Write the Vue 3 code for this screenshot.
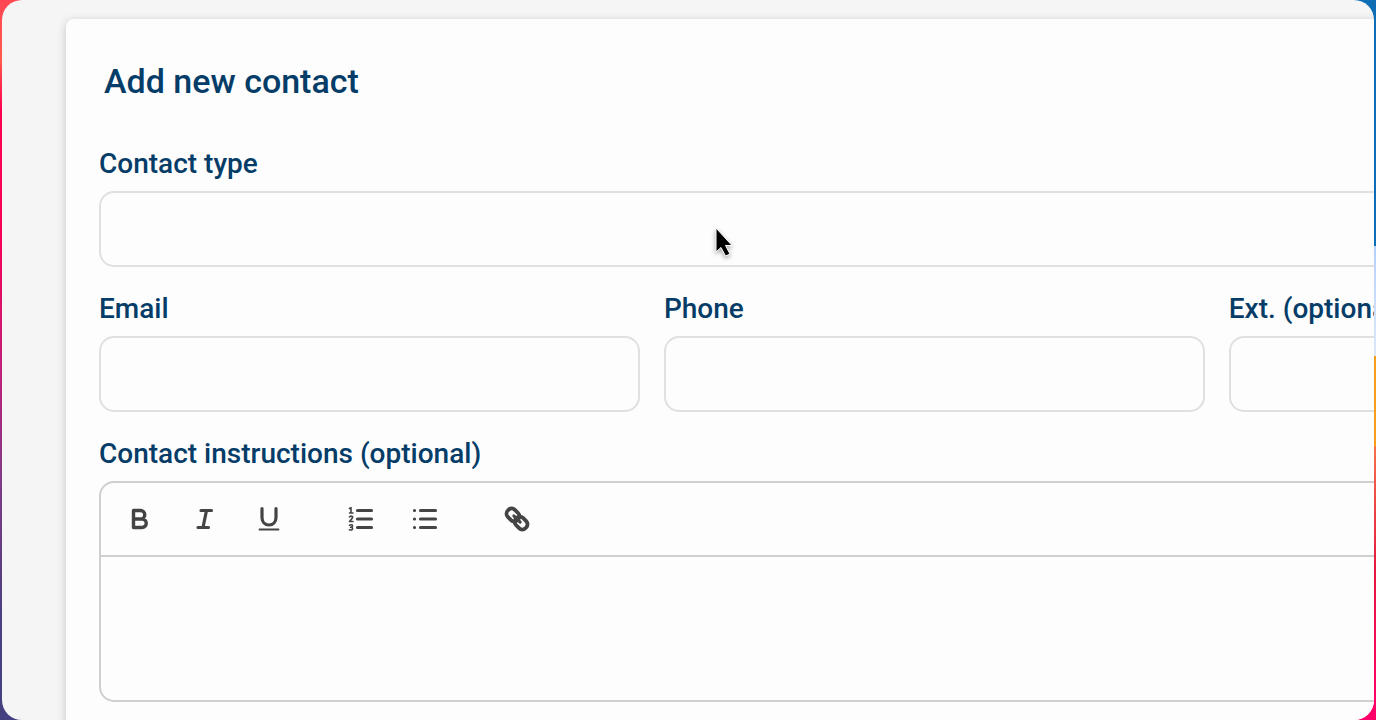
<script setup>
import { ref } from 'vue'

const contactType = ref('')
const email = ref('')
const phone = ref('')
const ext = ref('')
const instructions = ref('')
</script>

<template>
  <div class="backdrop">
    <main class="frame">
      <form class="card" @submit.prevent>
        <h1>Add new contact</h1>
        <div class="fields">
          <div class="field wide">
            <label for="type">Contact type</label>
            <input id="type" v-model="contactType" type="text" />
          </div>
          <div class="field">
            <label for="email">Email</label>
            <input id="email" v-model="email" type="email" />
          </div>
          <div class="field">
            <label for="phone">Phone</label>
            <input id="phone" v-model="phone" type="tel" />
          </div>
          <div class="field">
            <label for="ext">Ext. (optional)</label>
            <input id="ext" v-model="ext" type="text" />
          </div>
          <div class="field wide">
            <label for="instructions">Contact instructions (optional)</label>
            <div class="editor">
              <div class="toolbar" role="toolbar" aria-label="Formatting">
                <div class="group">
                  <button type="button" aria-label="Bold">
                    <svg viewBox="0 0 32 32"><path d="M8.500 7.500h7a4.200 4.200 0 0 1 0 8.500h-7zM8.500 16h8.500a4.200 4.200 0 0 1 0 8.500h-8.500z" stroke-width="3.400" /></svg>
                  </button>
                  <button type="button" aria-label="Italic">
                    <svg viewBox="0 0 32 32"><path d="M12 7.500h10.500M9 24.500h10.500M17.500 7.500l-3.500 17" stroke-width="3.200" /></svg>
                  </button>
                  <button type="button" aria-label="Underline">
                    <svg viewBox="0 0 32 32"><path d="M9 5.500v9c0 4.500 3 7.500 7 7.500s7-3 7-7.500v-9" stroke-width="3.200" /><path d="M6.500 26.500h19" stroke-width="1.800" /></svg>
                  </button>
                </div>
                <div class="group">
                  <button type="button" aria-label="Numbered list">
                    <svg viewBox="0 0 32 32"><path d="M12.500 7.500h14M12.500 16h14M12.500 24.500h14" stroke-width="3.200" /><path d="M4.500 5.500l1.500-.8v5M4.500 10h3.500M4.500 13.800q1.500-1.200 2.800-.3t-2.800 5h3.500M4.500 22.200q3-1 3 .5t-2 1.500q2.500.200 2 1.800t-3 .800" stroke-width="1.600" /></svg>
                  </button>
                  <button type="button" aria-label="Bulleted list">
                    <svg viewBox="0 0 32 32"><path d="M11.500 7.500h15M11.500 16h15M11.500 24.500h15" stroke-width="3.200" /><path d="M5.500 7.500h.01M5.500 16h.01M5.500 24.500h.01" stroke-width="3.200" /></svg>
                  </button>
                </div>
                <div class="group">
                  <button type="button" aria-label="Link">
                    <svg viewBox="0 0 32 32"><g stroke-width="3.800" transform="rotate(45 16 16)"><rect x="3.500" y="11" width="13.500" height="10" rx="4.500" /><rect x="15" y="11" width="13.500" height="10" rx="4.500" /><path d="M11.500 16h9" stroke-width="3" /></g></svg>
                  </button>
                </div>
              </div>
              <textarea id="instructions" v-model="instructions"></textarea>
            </div>
          </div>
        </div>
      </form>
    </main>
    <svg class="pointer" viewBox="0 0 24 34" aria-hidden="true">
      <path d="M4 3v24l5-4.500 4.500 8.500 4.500-2-4.500-8.500h6.500z" />
    </svg>
  </div>
</template>

<style>
body {
  background: #fd4651;
}
</style>

<style scoped>
.backdrop {
  position: relative;
  box-sizing: border-box;
  height: 100vh;
  padding: 0 2px;
  overflow: hidden;
  background:
    linear-gradient(#0f6db5 0 246px, #b5d0ff 246px, #dce8f8 356px, #f99d1c 356px 446px, #f6704b 447px, #e5173f 570px, #ff0068 700px) right / 50% 100% no-repeat,
    linear-gradient(#ff4654, #ff5a4a 60px, #ff0050 110px, #f80058 240px, #c0207a 370px, #803a88 480px, #48407f 620px, #44407f) left / 50% 100% no-repeat;
  font-family: Roboto, "Liberation Sans", sans-serif;
}

.frame {
  height: 100%;
  box-sizing: border-box;
  padding: 19px 0 0 64px;
  overflow: hidden;
  border-radius: 20px;
  background: #f5f5f5;
}

.card {
  box-sizing: border-box;
  width: 133%;
  min-height: 100%;
  padding: 41px 36px 32px 33px;
  border-radius: 8px;
  background: #fdfdfd;
  box-shadow: 0 2px 10px rgba(0, 0, 0, 0.2);
}

h1 {
  margin: 0 5px 46px;
  color: #053c68;
  font-size: 34px;
  font-weight: 500;
  line-height: 42px;
}

.fields {
  display: grid;
  grid-template-columns: repeat(3, 1fr);
  gap: 26px 24px;
}

.field {
  display: flex;
  flex-direction: column;
  gap: 11px;
}

.wide {
  grid-column: 1 / -1;
}

label {
  color: #053c68;
  font-size: 28px;
  font-weight: 500;
  line-height: 32px;
}

input {
  box-sizing: border-box;
  width: 100%;
  height: 76px;
  padding: 0 20px;
  border: 2px solid #e0e0e0;
  border-radius: 15px;
  background: transparent;
  font: 28px Roboto, "Liberation Sans", sans-serif;
  outline: none;
}

.editor {
  border: 2px solid #cfcfcf;
  border-radius: 15px;
}

.toolbar {
  display: flex;
  gap: 52px;
  padding: 16px 20px;
  border-bottom: 2px solid #cfcfcf;
}

.group {
  display: flex;
  gap: 24px;
}

button {
  display: grid;
  place-items: center;
  width: 40px;
  height: 40px;
  padding: 0;
  border: 0;
  background: none;
}

button svg {
  width: 32px;
  fill: none;
  stroke: #444;
  stroke-linecap: round;
  stroke-linejoin: round;
}

textarea {
  display: block;
  box-sizing: border-box;
  width: 100%;
  height: 143px;
  padding: 20px;
  border: 0;
  background: transparent;
  font: 28px Roboto, "Liberation Sans", sans-serif;
  outline: none;
  resize: none;
}

.pointer {
  position: absolute;
  top: 225px;
  left: 712px;
  width: 24px;
  fill: #000;
  stroke: #fff;
  stroke-width: 1;
  filter: drop-shadow(0 2px 2px rgba(0, 0, 0, 0.35));
  pointer-events: none;
}
</style>
